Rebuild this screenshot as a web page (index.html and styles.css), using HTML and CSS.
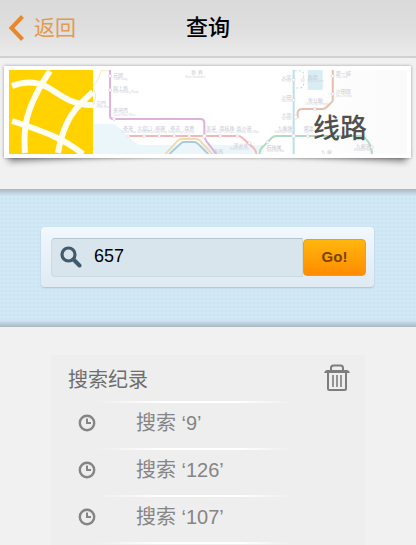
FILE: index.html
```html
<!DOCTYPE html>
<html lang="zh-CN">
<head>
  <meta charset="UTF-8" />
  <meta name="viewport" content="width=device-width, initial-scale=1.0"/>
  <title>查询</title>
  <link rel="stylesheet" href="styles.css">
</head>
<body>

  <header>
    <a class="back" href="#">
      <svg width="16" height="26" viewBox="0 0 16 26" aria-hidden="true"><path d="M14.500 1.500L3.500 13l11 11.500" fill="none" stroke="#e8872b" stroke-width="4"/></svg>
      <span>返回</span>
    </a>
    <h1>查询</h1>
  </header>

  <section class="banner">
    <div class="banner-inner">
      <svg class="tile" viewBox="0 0 84 84" aria-hidden="true">
        <rect width="84" height="84" fill="#ffd200"/>
        <g fill="none" stroke="#fffef0" stroke-width="6">
          <path d="M41 1Q18 35 16 60Q15 72 16 83"/>
          <path d="M84 22Q64 39 58 53Q52 66 49 83"/>
          <path d="M3 16Q21 9 36 16C49 22 61 36 84 35"/>
          <path d="M3 51Q31 60 44 66Q60 73 74 84"/>
        </g>
      </svg>
      <svg class="metro" viewBox="94 70 313 84" preserveAspectRatio="xMinYMid slice" aria-hidden="true">
        <path d="M94 124h19q3 0 6 3l16 15q3 3 8 3h35l6-3h12l8 3h60v9H94z" fill="#ebf6fb"/>
        <rect x="308" y="70" width="15" height="20" fill="#d9edf5"/>
        <g fill="none" stroke-width="2">
          <path d="M94 103c5-5 2-12-1-17 6-2 9-15 9-15h8" stroke="#f7e9c4" stroke-width="1"/>
          <path d="M111 70v46q0 3 3 3h87q4 0 4 4v12q0 3 2 6l10 13" stroke="#dcb2dc"/>
          <path d="M128 136h110q3 0 5 2l9 8q5 4 5 8" stroke="#f2b8b5"/>
          <path d="M166 154l12-13q2-2 5-2h13q3 0 5 2l12 13" stroke="#f2d9ae"/>
          <path d="M170 154l12-11q1-1 3-1h10q2 0 4 2l10 10" stroke="#a9ccd6"/>
          <path d="M260 154q0-5 4-8l8-8q2-2 5-2h83q4 0 7 4 5 5 5 14" stroke="#afdcc2"/>
          <path d="M294 70v84" stroke="#b9e0eb"/>
          <path d="M333 70v30q0 2-2 3l-4 4q-2 2-4 2h-20q-5 0-5 4v4h-4" stroke="#e6bfae"/>
          <path d="M295 71h5q4 0 4 4v9q0 4-4 4h-5" stroke="#b9dde8" stroke-width="1" stroke-dasharray="2 2"/>
        </g>
        <g fill="#fff" stroke="#d6bfd0" stroke-width=".5">
          <circle cx="111" cy="76" r="1.5"/><circle cx="111" cy="90" r="1.5"/><circle cx="115" cy="119" r="1.5"/>
          <circle cx="129" cy="136" r="1.5"/><circle cx="145" cy="136" r="1.5"/><circle cx="160" cy="136" r="1.5"/>
          <circle cx="175" cy="136" r="1.5"/><circle cx="190" cy="136" r="1.5"/><circle cx="205" cy="136" r="2"/>
          <circle cx="221" cy="136" r="1.5"/><circle cx="238" cy="136" r="1.5"/><circle cx="250" cy="143" r="1.5"/>
          <circle cx="268" cy="142" r="1.5"/><circle cx="294" cy="136" r="2"/><circle cx="308" cy="136" r="1.5"/>
          <circle cx="294" cy="80" r="1.5"/><circle cx="303" cy="80" r="1.5"/><circle cx="294" cy="100" r="1.5"/>
          <circle cx="296" cy="117" r="2"/><circle cx="315" cy="109" r="1.5"/><circle cx="333" cy="76" r="1.5"/>
          <circle cx="333" cy="94" r="1.5"/><circle cx="372" cy="147" r="1.5"/><circle cx="94" cy="103" r="1.5"/>
        </g>
        <g class="stops">
          <text x="114" y="77">元朗</text><text class="en" x="114" y="80">Yuen Long</text>
          <text x="114" y="90">錦上路</text><text class="en" x="114" y="93">Kam Sheung Road</text>
          <text x="114" y="112">荃灣西</text><text class="en" x="114" y="116">Tsuen Wan West</text>
          <text x="97" y="105">屯門</text><text class="en" x="97" y="108">Tuen Mun</text>
          <text x="192" y="74">新 界</text><text class="en" x="186" y="78">New Territories</text>
          <text x="124" y="130">荃灣</text><text class="en" x="122" y="133">Tsuen Wan</text>
          <text x="138" y="130">大窩口</text><text class="en" x="138" y="133">Tai Wo Hau</text>
          <text x="156" y="130">葵興</text><text class="en" x="154" y="133">Kwai Hing</text>
          <text x="171" y="130">葵芳</text><text class="en" x="169" y="133">Kwai Fong</text>
          <text x="185" y="130">荔景</text><text class="en" x="184" y="133">Lai King</text>
          <text x="207" y="130">美孚</text><text class="en" x="207" y="133">Mei Foo</text>
          <text x="220" y="130">荔枝角</text><text class="en" x="219" y="133">Lai Chi Kok</text>
          <text x="237" y="130">長沙灣</text><text class="en" x="236" y="133">Cheung Sha Wan</text>
          <text x="234" y="147">深水埗</text><text class="en" x="230" y="150">Sham Shui Po</text>
          <text x="214" y="153">南昌</text>
          <text x="267" y="149">石硤尾</text><text class="en" x="267" y="152">Shek Kip Mei</text>
          <text x="278" y="130">九龍塘</text><text class="en" x="275" y="133">Kowloon Tong</text>
          <text x="304" y="130">樂富</text><text class="en" x="304" y="133">Lok Fu</text>
          <text x="282" y="79">火炭</text><text class="en" x="282" y="82">Fo Tan</text>
          <text x="308" y="79">馬場</text><text class="en" x="308" y="82">Racecourse</text>
          <text x="282" y="99">沙田</text><text class="en" x="282" y="102">Sha Tin</text>
          <text x="282" y="117">大圍</text><text class="en" x="282" y="120">Tai Wai</text>
          <text x="308" y="102">車公廟</text><text class="en" x="305" y="105">Che Kung Temple</text>
          <text x="336" y="75">第一城</text><text class="en" x="336" y="78">City One</text>
          <text x="336" y="93">沙田圍</text><text class="en" x="336" y="97">Sha Tin Wai</text>
          <text x="356" y="148">九龍灣</text><text class="en" x="354" y="151">Kowloon Bay</text>
          <text x="321" y="154">九 龍</text>
        </g>
      </svg>
      <h2>线路</h2>
    </div>
  </section>

  <section class="search-band">
    <form class="search-box">
      <div class="field">
        <label for="keyword" aria-label="搜索">
          <svg width="22" height="22" viewBox="0 0 22 22"><g fill="none" stroke="#405b6d"><circle cx="8.5" cy="8.5" r="6.5" stroke-width="3.2"/><path d="M13.5 13.5l6 6" stroke-width="4" stroke-linecap="round"/></g></svg>
        </label>
        <input type="text" id="keyword" value="657" />
      </div>
      <button type="button">Go!</button>
    </form>
  </section>

  <section class="history">
    <div class="history-head">
      <h3>搜索纪录</h3>
      <button class="trash" type="button" aria-label="清除">
        <svg width="26" height="28" viewBox="0 0 26 28"><g fill="none" stroke="#7d7d7d" stroke-width="2"><path d="M7 6V4q0-2.500 2.500-2.500h7Q19 1.500 19 4v2" /><path d="M4 8v16.500q0 1.500 1.500 1.500h15q1.500 0 1.500-1.500V8"/><path d="M9 11v12M13 11v12M17 11v12" stroke-width="1.600"/></g><path d="M3 6h20q2 0 3 3H0q1-3 3-3z" fill="#7d7d7d"/></svg>
      </button>
    </div>
    <ul>
      <li><a href="#"><svg width="18" height="18" viewBox="0 0 18 18"><g fill="none" stroke="#858585" stroke-width="2.400"><circle cx="9" cy="9" r="7.200"/><path d="M9 4.500V9h4" stroke-width="2"/></g></svg><span>搜索 ‘9’</span></a></li>
      <li><a href="#"><svg width="18" height="18" viewBox="0 0 18 18"><g fill="none" stroke="#858585" stroke-width="2.400"><circle cx="9" cy="9" r="7.200"/><path d="M9 4.500V9h4" stroke-width="2"/></g></svg><span>搜索 ‘126’</span></a></li>
      <li><a href="#"><svg width="18" height="18" viewBox="0 0 18 18"><g fill="none" stroke="#858585" stroke-width="2.400"><circle cx="9" cy="9" r="7.200"/><path d="M9 4.500V9h4" stroke-width="2"/></g></svg><span>搜索 ‘107’</span></a></li>
    </ul>
  </section>

</body>
</html>
```
FILE: styles.css
```css
* {
  box-sizing: border-box;
}

body {
  margin: 0;
  min-height: 100vh;
  display: flex;
  flex-direction: column;
  font-family: "Liberation Sans", "Noto Sans CJK SC", sans-serif;
  background-color: #f1f1f1;
  color: #000;
}

h1, h2, h3, ul {
  margin: 0;
  padding: 0;
  font-weight: normal;
}

a {
  color: inherit;
  text-decoration: none;
}

svg {
  display: block;
}

header {
  display: grid;
  grid-template-columns: 1fr auto 1fr;
  align-items: center;
  height: 58px;
  padding: 0 8px;
  background: linear-gradient(#dadada, #dedede 50%, #ebebeb);
  border-bottom: 2px solid #d0d0ce;
}

header h1 {
  font-size: 22px;
  line-height: 30px;
  font-weight: 500;
}

.back {
  display: flex;
  align-items: center;
  gap: 10px;
  font-size: 21px;
  line-height: 30px;
  color: #e39a50;
}

.banner {
  position: relative;
  z-index: 0;
  margin: 8px 5px 0 4px;
}

/* lifted corners under the card */
.banner::before,
.banner::after {
  content: "";
  position: absolute;
  z-index: -1;
  bottom: 8px;
  width: 45%;
  height: 12px;
  box-shadow: 0 7px 6px rgba(0, 0, 0, 0.45);
}

.banner::before {
  left: 4px;
  transform: rotate(-3deg);
}

.banner::after {
  right: 4px;
  transform: rotate(3deg);
}

.banner-inner {
  position: relative;
  display: flex;
  padding: 4px 4px 4px 5px;
  background-color: #fff;
  box-shadow: 0 0 3px rgba(0, 0, 0, 0.35);
}

.tile {
  flex: none;
  width: 84px;
  height: 84px;
}

.metro {
  flex: 1;
  min-width: 0;
  height: 84px;
  background: linear-gradient(90deg, #fff 65%, #fafafa);
}

.stops text {
  font-size: 5px;
  fill: #c6c8d2;
}

.stops .en {
  font-size: 3px;
  fill: #d2d4dc;
}

.banner h2 {
  position: absolute;
  right: 44px;
  bottom: 9px;
  font-size: 27px;
  line-height: 40px;
  font-weight: 500;
  color: #505050;
}

.search-band {
  margin-top: 31px;
  padding: 38px 42px 40px 41px;
  background:
    linear-gradient(#a9b8c1, transparent) top / 100% 7px no-repeat,
    linear-gradient(transparent, #a9b8c1) bottom / 100% 7px no-repeat,
    radial-gradient(#cce4f2 1px, transparent 1px) 0 0 / 4px 4px,
    #d1e8f6;
}

.search-box {
  display: flex;
  align-items: center;
  height: 60px;
  padding: 0 8px 0 10px;
  border-radius: 4px;
  background: linear-gradient(#f1f8fe, #dfeaf3);
  box-shadow: 0 1px 2px #a9c0cf;
}

.field {
  flex: 1;
  min-width: 0;
  display: flex;
  align-items: center;
  gap: 12px;
  height: 39px;
  padding-left: 8px;
  background-color: #d8e5ed;
  border: 1px solid #ccdae3;
  border-top-color: #b5c5ce;
  border-radius: 4px 0 0 4px;
}

.field input {
  flex: 1;
  min-width: 0;
  padding: 0 0 2px;
  border: none;
  outline: none;
  background: none;
  font: 18px "Liberation Sans", sans-serif;
  color: #000;
}

.search-box button {
  width: 63px;
  height: 37px;
  padding: 0 0 2px;
  border: 1px solid #d9a03c;
  border-radius: 4px;
  background: linear-gradient(#ffb60d, #ff8c00);
  font: bold 15px "Liberation Sans", sans-serif;
  color: #7b4207;
  cursor: pointer;
}

.history {
  flex: 1;
  margin: 28px 51px 0;
  background-color: #eee;
}

.history-head {
  display: flex;
  align-items: center;
  justify-content: space-between;
  height: 46px;
  padding: 2px 15px 0 17px;
}

.history h3 {
  padding-top: 2px;
  font-size: 20px;
  line-height: 28px;
  color: #6e6e6e;
}

.trash {
  padding: 0 0 2px;
  border: none;
  background: none;
  cursor: pointer;
}

.history ul {
  list-style: none;
  padding-bottom: 2px;
  background: linear-gradient(90deg, transparent 14%, #fff 35%, #fff 60%, transparent 77%) bottom / 100% 2px no-repeat;
}

.history li {
  height: 47px;
  background: linear-gradient(90deg, transparent 14%, #fff 35%, #fff 60%, transparent 77%) top / 100% 2px no-repeat;
}

.history li a {
  display: flex;
  align-items: center;
  gap: 40px;
  height: 43px;
  padding-left: 27px;
  font-size: 20px;
  line-height: 26px;
  color: #858585;
}
```
